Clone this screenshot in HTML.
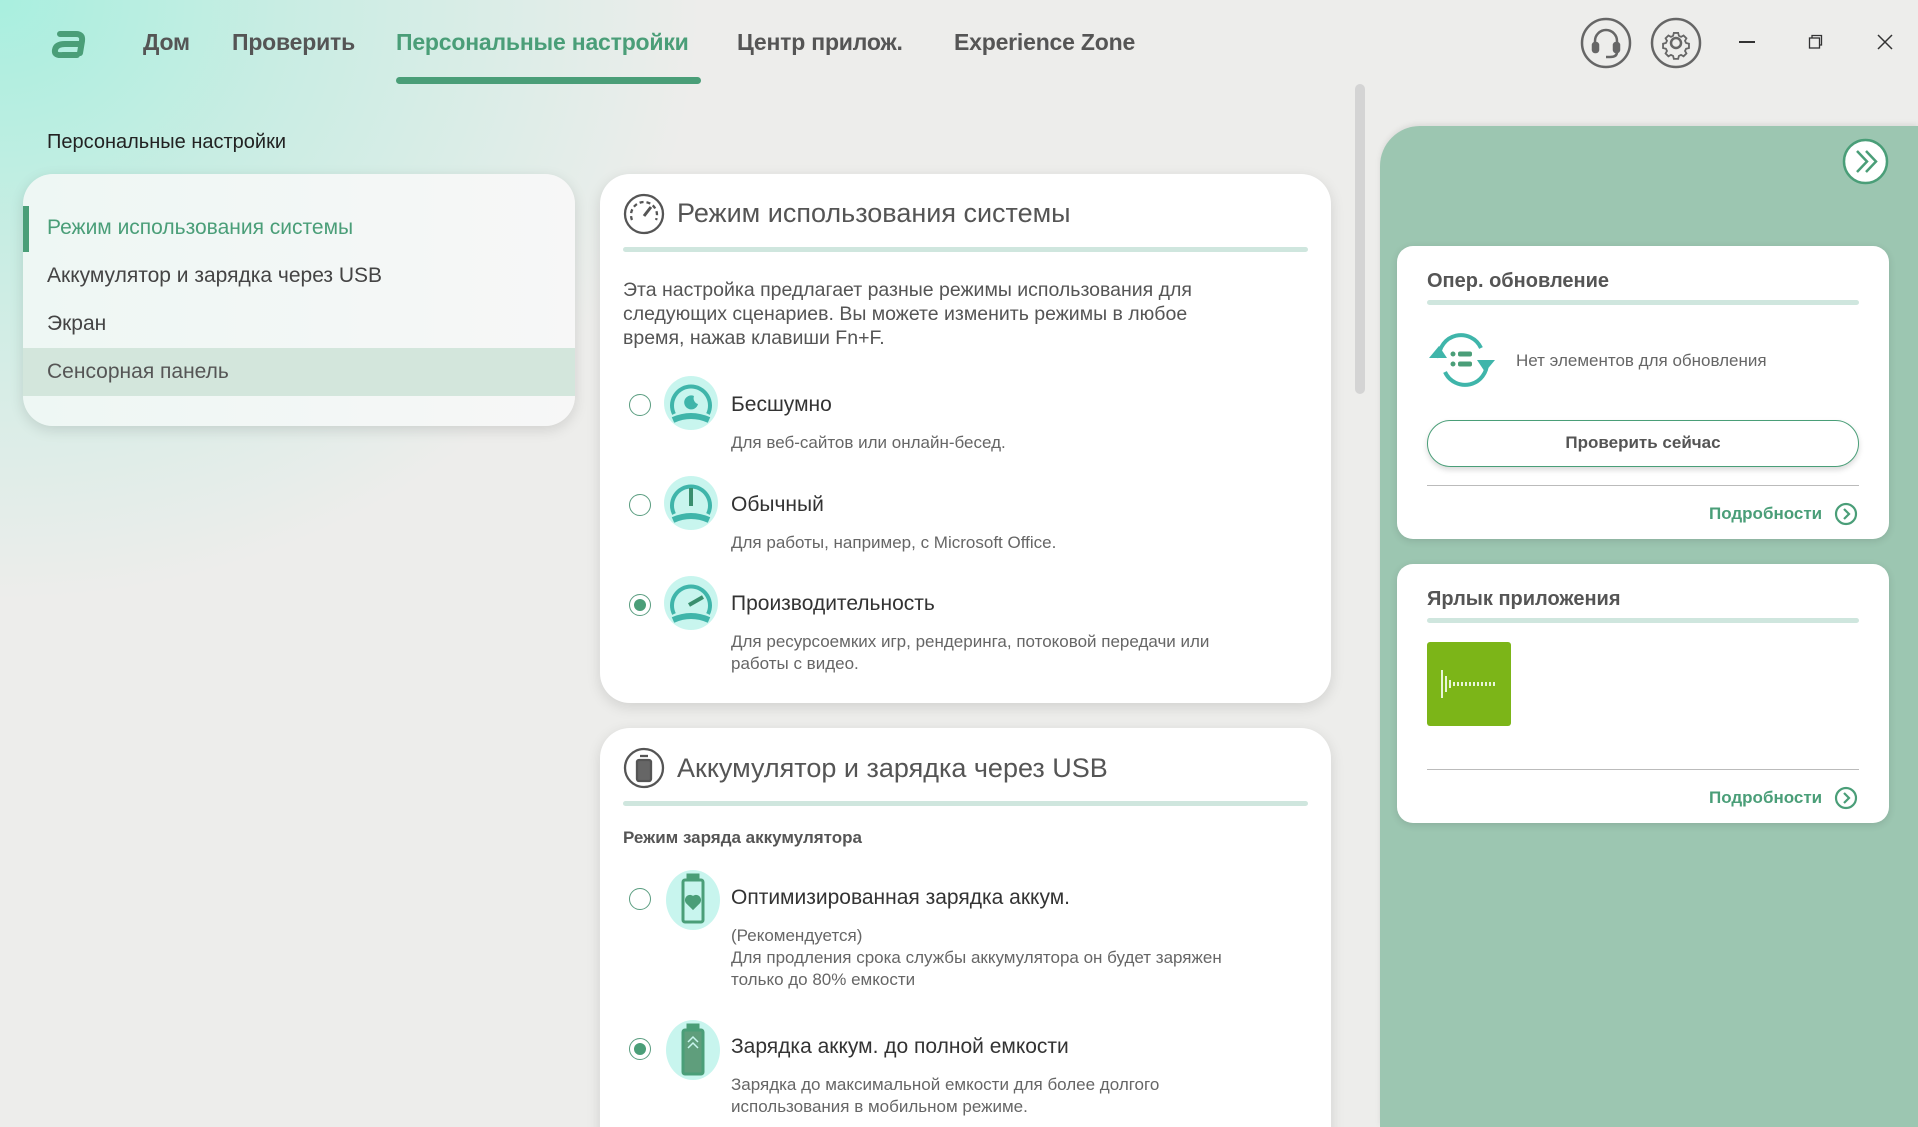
<!DOCTYPE html>
<html><head><meta charset="utf-8"><style>
*{margin:0;padding:0;box-sizing:border-box}
html,body{width:1918px;height:1127px;overflow:hidden}
body{position:relative;font-family:"Liberation Sans",sans-serif;background:#ededeb;color:#333}
.bg{position:absolute;inset:0;background:radial-gradient(ellipse 700px 600px at 0 0,#a9efdf 0%,#c8ede3 40%,rgba(237,237,235,0) 100%)}
.a{position:absolute;white-space:nowrap}
.nav{font-size:23px;font-weight:bold;color:#555;top:29px;letter-spacing:-0.2px}
.card{position:absolute;background:#fff;border-radius:30px;box-shadow:0 4px 14px rgba(0,0,0,.12)}
.div{position:absolute;height:5px;background:#cfe6de;border-radius:3px}
.radio{position:absolute;width:22px;height:22px;border:1.5px solid #5a9d80;border-radius:50%;background:#fff}
.radio.on::after{content:"";position:absolute;left:3.5px;top:3.5px;width:12px;height:12px;border-radius:50%;background:#4a9e78}
.ot{font-size:21px;color:#333}
.od{font-size:17px;color:#666;line-height:22px}
.ic{position:absolute;width:54px;height:54px;border-radius:50%;background:#c8f5ee}
.rc{position:absolute;background:#fff;border-radius:16px;box-shadow:0 2px 8px rgba(0,0,0,.12)}
.more{font-size:17px;font-weight:bold;color:#4a9e78}
.li{font-size:21px}
</style></head><body>
<div class="bg"></div>
<svg class="a" style="left:50px;top:28px" width="40" height="30" fill="none" stroke="#4a9e78" stroke-width="6" stroke-linecap="round"><path d="M10 6h16q7 0 6 7l-2 12"/><path d="M29 16h-14q-9 0-10 6t8 5h14"/></svg>
<div class="a nav" style="left:143px">Дом</div>
<div class="a nav" style="left:232px">Проверить</div>
<div class="a nav" style="left:396px;color:#4a9e78">Персональные настройки</div>
<div class="a" style="left:396px;top:77px;width:305px;height:7px;border-radius:4px;background:#4a9e78"></div>
<div class="a nav" style="left:737px">Центр прилож.</div>
<div class="a nav" style="left:954px">Experience Zone</div>
<svg class="a" style="left:1579px;top:16px" width="54" height="54" viewBox="0 0 54 54" fill="none" stroke="#666" stroke-width="2.5"><circle cx="27" cy="27" r="24"/><path d="M16 30v-5a11 11 0 0 1 22 0v5"/><rect x="14" y="27" width="5" height="9" rx="2" fill="#666"/><rect x="35" y="27" width="5" height="9" rx="2" fill="#666"/><path d="M38 36q0 5-7 5h-4"/></svg>
<svg class="a" style="left:1649px;top:16px" width="54" height="54" viewBox="0 0 54 54" fill="none" stroke="#666" stroke-width="2.5"><circle cx="27" cy="27" r="24"/><circle cx="27" cy="27" r="5"/><path d="M24 13h6l1 4 3 1.5 3.5-2 4 4-2 3.5 1.5 3 4 1v6l-4 1-1.5 3 2 3.5-4 4-3.5-2-3 1.5-1 4h-6l-1-4-3-1.5-3.5 2-4-4 2-3.5-1.5-3-4-1v-6l4-1 1.5-3-2-3.5 4-4 3.5 2 3-1.5z" transform="translate(27 27) scale(.72) translate(-27 -27)"/></svg>
<div class="a" style="left:1739px;top:41px;width:16px;height:1.5px;background:#333"></div>
<svg class="a" style="left:1808px;top:34px" width="16" height="16" fill="none" stroke="#333" stroke-width="1.3"><rect x="1.5" y="4" width="10" height="10"/><path d="M4 4V1.5h9.5V11H11.5"/></svg>
<svg class="a" style="left:1877px;top:34px" width="16" height="16" stroke="#333" stroke-width="1.5"><path d="M1 1l14 14M15 1L1 15"/></svg>

<div class="a" style="left:47px;top:131px;font-size:20px;color:#222">Персональные настройки</div>
<div class="card" style="left:23px;top:174px;width:552px;height:252px;background:linear-gradient(90deg,#eef7f4,#f7f7f7)">
<div class="a" style="left:0;top:32px;width:6px;height:46px;background:#4a9e78"></div>
<div class="a li" style="left:24px;top:42px;color:#4a9e78">Режим использования системы</div>
<div class="a li" style="left:24px;top:90px;color:#444">Аккумулятор и зарядка через USB</div>
<div class="a li" style="left:24px;top:138px;color:#444">Экран</div>
<div class="a" style="left:0;top:174px;width:552px;height:48px;background:#d3e6dc"></div>
<div class="a li" style="left:24px;top:186px;color:#555">Сенсорная панель</div>
</div>

<div class="a" style="left:1355px;top:84px;width:10px;height:310px;border-radius:5px;background:#d4d4d4"></div>

<div class="card" style="left:600px;top:174px;width:731px;height:529px">
<svg class="a" style="left:23px;top:19px" width="42" height="42" fill="none" stroke="#555" stroke-width="2.3"><circle cx="21" cy="21" r="19"/><path d="M9 27a13 13 0 1 1 24 0" stroke-dasharray="4 3"/><path d="M21 23l7-9" stroke-width="3"/></svg>
<div class="a" style="left:77px;top:24px;font-size:27px;color:#555">Режим использования системы</div>
<div class="div" style="left:23px;top:73px;width:685px"></div>
<div class="a od" style="left:23px;top:104px;font-size:19.5px;color:#555;line-height:24px">Эта настройка предлагает разные режимы использования для<br>следующих сценариев. Вы можете изменить режимы в любое<br>время, нажав клавиши Fn+F.</div>
<div class="radio" style="left:29px;top:220px"></div>
<div class="ic" style="left:64px;top:202px"></div>
<svg class="a" style="left:64px;top:202px" width="54" height="54" fill="none" stroke="#3fb5aa" stroke-width="4"><path d="M10 38a19 19 0 1 1 34 0" /><path d="M9 44q18-8 36 0" stroke-width="6"/><path d="M30 20a7 7 0 1 0 4 8 6 6 0 0 1-4-8z" fill="#3fb5aa" stroke="none"/></svg>
<div class="a ot" style="left:131px;top:219px">Бесшумно</div>
<div class="a od" style="left:131px;top:258px">Для веб-сайтов или онлайн-бесед.</div>
<div class="radio" style="left:29px;top:320px"></div>
<div class="ic" style="left:64px;top:302px"></div>
<svg class="a" style="left:64px;top:302px" width="54" height="54" fill="none" stroke="#3fb5aa" stroke-width="4"><path d="M10 38a19 19 0 1 1 34 0"/><path d="M9 44q18-8 36 0" stroke-width="6"/><path d="M27 12v18" stroke="#3a8f6e" stroke-width="4"/></svg>
<div class="a ot" style="left:131px;top:319px">Обычный</div>
<div class="a od" style="left:131px;top:358px">Для работы, например, с Microsoft Office.</div>
<div class="radio on" style="left:29px;top:420px"></div>
<div class="ic" style="left:64px;top:402px"></div>
<svg class="a" style="left:64px;top:402px" width="54" height="54" fill="none" stroke="#3fb5aa" stroke-width="4"><path d="M10 38a19 19 0 1 1 34 0"/><path d="M9 44q18-8 36 0" stroke-width="6"/><path d="M25 29l14-8" stroke="#3a8f6e" stroke-width="4"/></svg>
<div class="a ot" style="left:131px;top:418px">Производительность</div>
<div class="a od" style="left:131px;top:457px">Для ресурсоемких игр, рендеринга, потоковой передачи или<br>работы с видео.</div>
</div>

<div class="card" style="left:600px;top:728px;width:731px;height:440px">
<svg class="a" style="left:23px;top:19px" width="42" height="42" fill="none" stroke="#555" stroke-width="2.3"><circle cx="21" cy="21" r="19"/><rect x="14" y="13" width="14" height="21" rx="2" fill="#666"/><path d="M17 9h8"/></svg>
<div class="a" style="left:77px;top:25px;font-size:27px;color:#555">Аккумулятор и зарядка через USB</div>
<div class="div" style="left:23px;top:73px;width:685px"></div>
<div class="a" style="left:23px;top:100px;font-size:17px;font-weight:bold;color:#555">Режим заряда аккумулятора</div>
<div class="radio" style="left:29px;top:160px"></div>
<div class="ic" style="left:66px;top:142px;height:60px"></div>
<svg class="a" style="left:66px;top:142px" width="54" height="60" fill="none" stroke="#4a9e78" stroke-width="3"><rect x="17" y="10" width="20" height="42" rx="2"/><rect x="22" y="5" width="10" height="5" fill="#4a9e78"/><path d="M27 38l-6-6a3.5 3.5 0 0 1 6-4 3.5 3.5 0 0 1 6 4z" fill="#4a9e78"/></svg>
<div class="a ot" style="left:131px;top:158px">Оптимизированная зарядка аккум.</div>
<div class="a od" style="left:131px;top:197px">(Рекомендуется)<br>Для продления срока службы аккумулятора он будет заряжен<br>только до 80% емкости</div>
<div class="radio on" style="left:29px;top:310px"></div>
<div class="ic" style="left:66px;top:292px;height:60px"></div>
<svg class="a" style="left:66px;top:292px" width="54" height="60" fill="none" stroke="#4a9e78" stroke-width="3"><rect x="17" y="10" width="20" height="44" rx="2" fill="#5f9e7c"/><rect x="22" y="5" width="10" height="5" fill="#4a9e78"/><path d="M22 22l5-5 5 5M22 28l5-5 5 5" stroke="#c8f5ee" stroke-width="1.5"/></svg>
<div class="a ot" style="left:131px;top:307px">Зарядка аккум. до полной емкости</div>
<div class="a od" style="left:131px;top:346px">Зарядка до максимальной емкости для более долгого<br>использования в мобильном режиме.</div>
</div>

<div class="a" style="left:1380px;top:126px;right:0;bottom:0;background:#9cc6b1;border-radius:40px 0 0 0;box-shadow:0 -2px 6px rgba(0,0,0,.08)"></div>
<svg class="a" style="left:1842px;top:138px" width="47" height="47" fill="#fff" stroke="#4a9e78" stroke-width="2.5"><circle cx="23.5" cy="23.5" r="21.5"/><path d="M15 13l10 10.5-10 10.5M24 13l10 10.5-10 10.5" fill="none"/></svg>

<div class="rc" style="left:1397px;top:246px;width:492px;height:293px">
<div class="a" style="left:30px;top:24px;font-size:20px;font-weight:bold;color:#555">Опер. обновление</div>
<div class="div" style="left:30px;top:54px;width:432px"></div>
<svg class="a" style="left:30px;top:84px" width="72" height="60" fill="none" stroke="#3fb5aa" stroke-width="4"><path d="M12 28a22 22 0 0 1 42-10"/><path d="M60 32a22 22 0 0 1-42 10"/><path d="M2 28l10-12 8 12z" fill="#3fb5aa" stroke="none"/><path d="M68 30l-10 12-8-12z" fill="#3fb5aa" stroke="none"/><g fill="#4a9e78" stroke="none"><circle cx="26" cy="24" r="2.5"/><circle cx="26" cy="34" r="2.5"/><rect x="31" y="21.5" width="14" height="5" rx="2"/><rect x="31" y="31.5" width="14" height="5" rx="2"/></g></svg>
<div class="a" style="left:119px;top:105px;font-size:17px;color:#666">Нет элементов для обновления</div>
<div class="a" style="left:30px;top:174px;width:432px;height:47px;border:1.5px solid #4a9e78;border-radius:24px;box-shadow:0 3px 6px rgba(0,0,0,.15);text-align:center;line-height:44px;font-size:17px;font-weight:bold;color:#555">Проверить сейчас</div>
<div class="a" style="left:30px;top:239px;width:432px;height:1px;background:#bbb"></div>
<div class="a more" style="left:312px;top:258px">Подробности</div>
<svg class="a" style="left:437px;top:256px" width="24" height="24" fill="none" stroke="#4a9e78" stroke-width="2.2"><circle cx="12" cy="12" r="10"/><path d="M10 7l5 5-5 5"/></svg>
</div>

<div class="rc" style="left:1397px;top:564px;width:492px;height:259px">
<div class="a" style="left:30px;top:24px;font-size:20px;font-weight:bold;color:#555">Ярлык приложения</div>
<div class="div" style="left:30px;top:54px;width:432px"></div>
<div class="a" style="left:30px;top:78px;width:84px;height:84px;background:#7cb518;border-radius:3px"></div>
<svg class="a" style="left:30px;top:78px" width="84" height="84" stroke="#e8f5d8" stroke-width="2"><path d="M15 28v28M19 34v16M23 38v8M27 40v4M31 40v4M35 40v4M39 40v4M43 40v4M47 40v4M51 40v4M55 40v4M59 40v4M63 40v4M67 40v4"/></svg>
<div class="a" style="left:30px;top:205px;width:432px;height:1px;background:#bbb"></div>
<div class="a more" style="left:312px;top:224px">Подробности</div>
<svg class="a" style="left:437px;top:222px" width="24" height="24" fill="none" stroke="#4a9e78" stroke-width="2.2"><circle cx="12" cy="12" r="10"/><path d="M10 7l5 5-5 5"/></svg>
</div>
</body></html>
